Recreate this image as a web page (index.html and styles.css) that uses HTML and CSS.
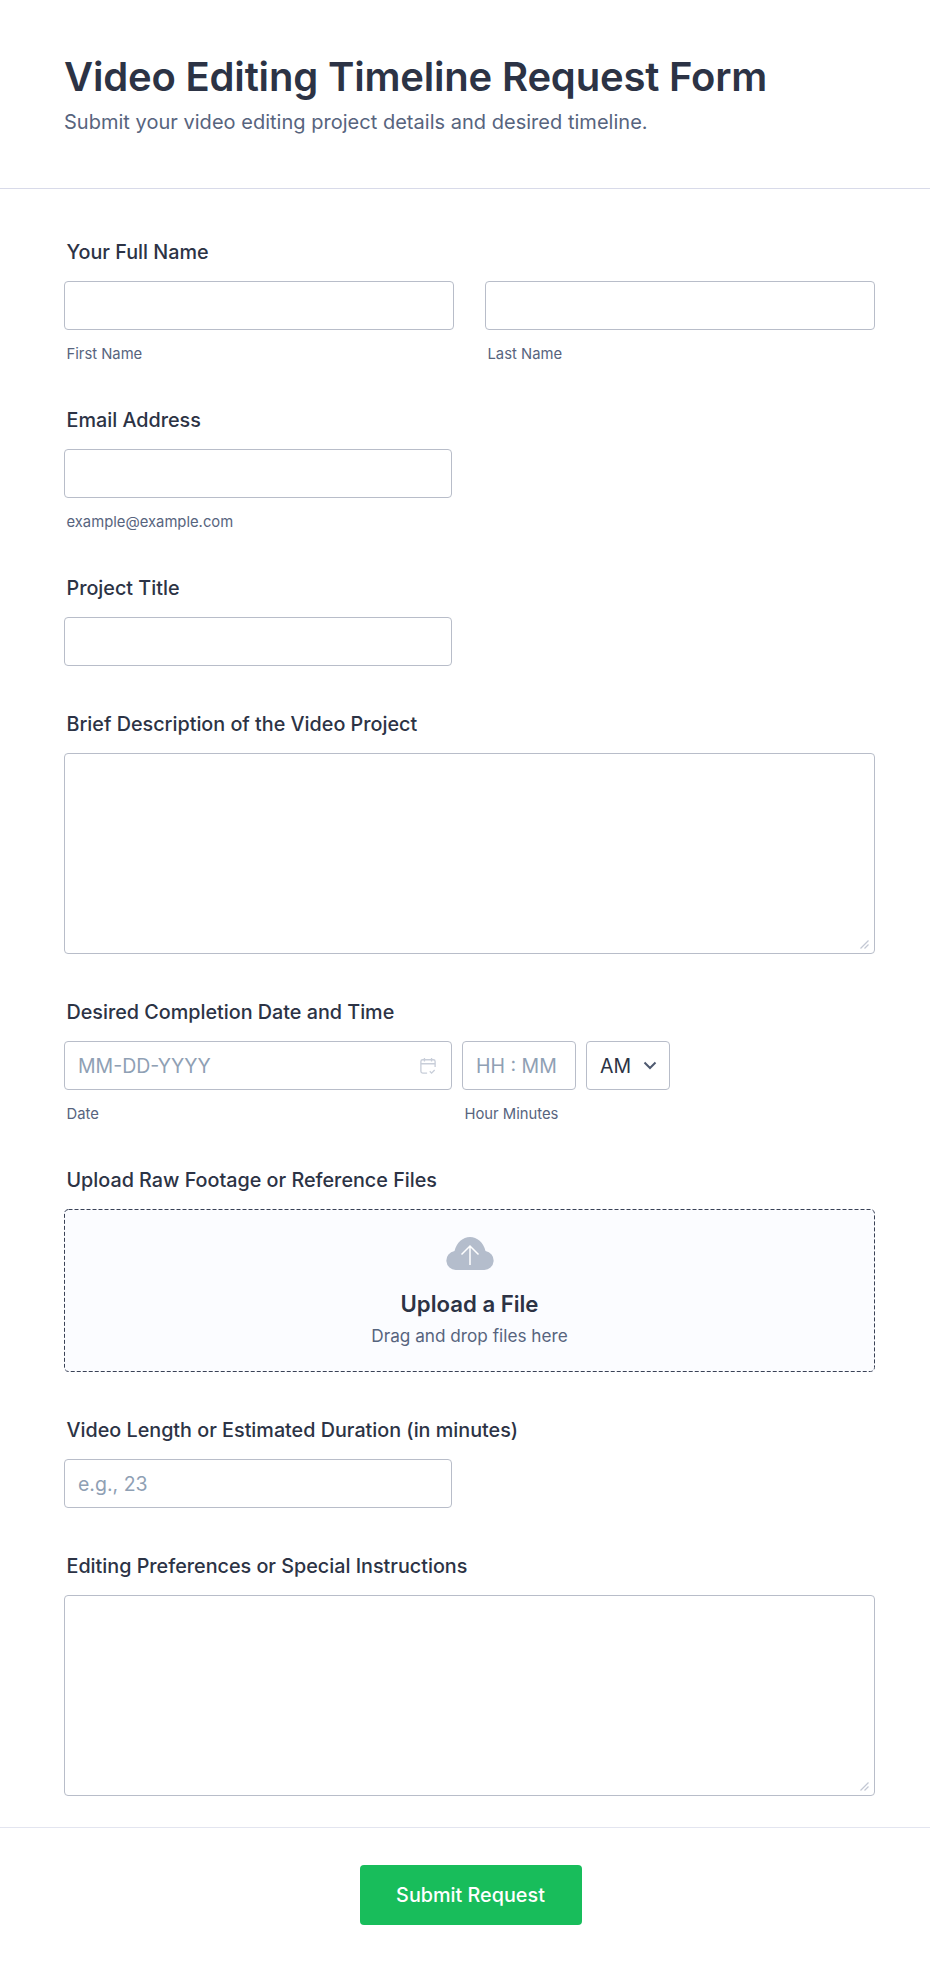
FILE: index.html
```html
<!doctype html>
<html lang="en">
<head>
    <meta charset="utf-8">
    <title>Video Editing Timeline Request Form</title>
    <link rel="stylesheet" href="styles.css">
</head>
<body>

<header class="form-header">
    <h1>Video Editing Timeline Request Form</h1>
    <p>Submit your video editing project details and desired timeline.</p>
</header>

<form class="form-body">
    <div class="field">
        <label class="field-label">Your Full Name</label>
        <div class="name-row">
            <div class="name-col">
                <input class="text-input" type="text">
                <span class="sub-label">First Name</span>
            </div>
            <div class="name-col">
                <input class="text-input" type="text">
                <span class="sub-label">Last Name</span>
            </div>
        </div>
    </div>

    <div class="field">
        <label class="field-label">Email Address</label>
        <input class="text-input half" type="email">
        <span class="sub-label">example@example.com</span>
    </div>

    <div class="field">
        <label class="field-label">Project Title</label>
        <input class="text-input half" type="text">
    </div>

    <div class="field">
        <label class="field-label">Brief Description of the Video Project</label>
        <div class="area-wrap">
            <textarea class="text-area"></textarea>
            <svg class="resize-grip" width="9" height="9" viewBox="0 0 9 9" fill="none" stroke="#c3c8d4" stroke-width="1.2">
                <path d="M0.500 8.500L8.500 0.500M4.500 8.500L8.500 4.500"/>
            </svg>
        </div>
    </div>

    <div class="field">
        <label class="field-label">Desired Completion Date and Time</label>
        <div class="date-row">
            <div class="date-col">
                <div class="date-wrap">
                    <input class="text-input" type="text" placeholder="MM-DD-YYYY">
                    <svg class="calendar-icon" width="16" height="18" viewBox="0 0 18 20" fill="none" stroke="#c8ced9" stroke-width="1.5">
                        <path d="M8 18H3a2 2 0 0 1-2-2V5a2 2 0 0 1 2-2h12a2 2 0 0 1 2 2v6"/>
                        <path d="M1 7.500h16M5 1v4M13 1v4"/>
                        <path d="M11 16l2 2 3.500-3.500"/>
                    </svg>
                </div>
                <span class="sub-label">Date</span>
            </div>
            <div class="time-col">
                <input class="text-input" type="text" placeholder="HH : MM">
                <span class="sub-label">Hour Minutes</span>
            </div>
            <div class="ampm">
                <span>AM</span>
                <svg width="14" height="9" viewBox="0 0 14 9" fill="none" stroke="#4f5a70" stroke-width="2">
                    <path d="M1.500 1.500L7 7l5.500-5.500"/>
                </svg>
            </div>
        </div>
    </div>

    <div class="field">
        <label class="field-label">Upload Raw Footage or Reference Files</label>
        <div class="upload-box">
            <svg class="dash-frame" width="100%" height="100%">
                <rect class="dash-line" x="0.500" y="0.500" rx="4" ry="4"/>
            </svg>
            <svg class="upload-icon" width="48" height="33" viewBox="0 0 48 33">
                <path fill="#b4bdcc" d="M10 33a9.500 9.500 0 0 1-1.500-18.900C10.500 5.500 17 0 24 0s13.500 5.500 15.500 14.100A9.500 9.500 0 0 1 38 33z"/>
                <path fill="none" stroke="#fff" stroke-width="1.500" d="M24 28V9M15.500 17.500L24 9l8.500 8.500"/>
            </svg>
            <div class="upload-title">Upload a File</div>
            <div class="upload-hint">Drag and drop files here</div>
        </div>
    </div>

    <div class="field">
        <label class="field-label">Video Length or Estimated Duration (in minutes)</label>
        <input class="text-input half" type="text" placeholder="e.g., 23">
    </div>

    <div class="field">
        <label class="field-label">Editing Preferences or Special Instructions</label>
        <div class="area-wrap">
            <textarea class="text-area"></textarea>
            <svg class="resize-grip" width="9" height="9" viewBox="0 0 9 9" fill="none" stroke="#c3c8d4" stroke-width="1.2">
                <path d="M0.500 8.500L8.500 0.500M4.500 8.500L8.500 4.500"/>
            </svg>
        </div>
    </div>
</form>

<footer class="form-footer">
    <button class="submit-btn" type="button">Submit Request</button>
</footer>

</body>
</html>
```

FILE: styles.css
```css
* {
    box-sizing: border-box;
}

body {
    margin: 0;
    font-family: Inter, "Liberation Sans", sans-serif;
    color: #2c3345;
    background-color: #ffffff;
}

.form-header {
    height: 189px;
    padding: 52px 64px 0;
    border-bottom: 1px solid #d8dae9;
}

.form-header h1 {
    margin: 0;
    font-size: 40px;
    line-height: 50px;
    font-weight: 600;
    letter-spacing: -0.18px;
}

.form-header p {
    margin: 7px 0 0;
    font-size: 20px;
    line-height: 26px;
    letter-spacing: 0.02px;
    color: #57647e;
}

.form-body {
    padding: 51px 55px 31px 64px;
}

.field {
    margin-bottom: 46px;
}

.field:last-child {
    margin-bottom: 0;
}

.field-label {
    display: block;
    margin: 0 0 17px 2.500px;
    font-size: 19.750px;
    line-height: 24px;
    font-weight: 450;
}

.sub-label {
    display: block;
    margin: 16px 0 0 2.500px;
    font-size: 14.800px;
    line-height: 16px;
    color: #57647e;
}

.text-input,
.text-area {
    display: block;
    width: 100%;
    border: 1px solid #b8bdc9;
    border-radius: 4px;
    background: #ffffff;
    font-family: inherit;
    font-size: 19.500px;
    color: #2c3345;
    outline: none;
}

.text-input {
    height: 49px;
    padding: 0 13px;
}

.text-input::placeholder {
    color: #8fa0b4;
    opacity: 1;
}

.text-input.half {
    width: 388px;
}

.area-wrap {
    position: relative;
}

.text-area {
    height: 201px;
    padding: 10px 12px;
    resize: none;
}

.resize-grip {
    position: absolute;
    right: 6px;
    bottom: 5px;
}

.name-row {
    display: flex;
    gap: 31px;
}

.name-col {
    width: 390px;
}

.date-row {
    display: flex;
    align-items: flex-start;
    gap: 10px;
}

.date-col {
    width: 388px;
}

.date-wrap {
    position: relative;
}

.calendar-icon {
    position: absolute;
    top: 16px;
    right: 16px;
}

.time-col {
    width: 114px;
}

.ampm {
    display: flex;
    align-items: center;
    justify-content: space-between;
    width: 84px;
    height: 49px;
    padding: 0 12px 0 13px;
    border: 1px solid #b8bdc9;
    border-radius: 4px;
    font-size: 19.500px;
}

.upload-box {
    position: relative;
    display: flex;
    flex-direction: column;
    align-items: center;
    height: 163px;
    padding-top: 28px;
    border-radius: 4px;
    background-color: #fbfcff;
}

.dash-frame {
    position: absolute;
    top: 0;
    left: 0;
}

.dash-line {
    width: calc(100% - 1px);
    height: calc(100% - 1px);
    fill: none;
    stroke: #3a4256;
    stroke-width: 1;
    stroke-dasharray: 4 2;
}

.upload-title {
    margin-top: 20px;
    font-size: 22.200px;
    line-height: 28px;
    font-weight: 600;
}

.upload-hint {
    margin-top: 5px;
    font-size: 17.200px;
    line-height: 26px;
    color: #57647e;
}

.form-footer {
    display: flex;
    justify-content: center;
    padding: 37px 0 49px 11px;
    border-top: 1px solid #e3e5f0;
}

.submit-btn {
    width: 222px;
    height: 60px;
    border: none;
    border-radius: 4px;
    background-color: #18bd5b;
    color: #ffffff;
    font-family: inherit;
    font-size: 19.800px;
    font-weight: 500;
    cursor: pointer;
}
```
